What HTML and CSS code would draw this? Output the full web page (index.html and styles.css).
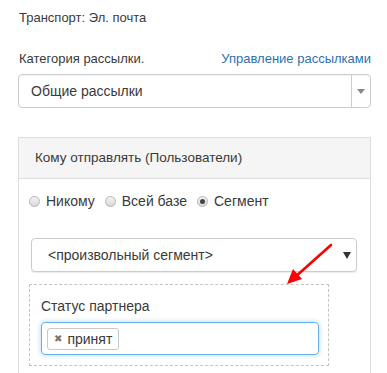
FILE: index.html
```html
<!DOCTYPE html>
<html lang="ru">
<head>
  <meta charset="UTF-8" />
  <title>Рассылка</title>
  <link rel="stylesheet" href="styles.css">
</head>
<body>
 <div class="page">
  <p class="transport">Транспорт: Эл. почта</p>

  <div class="field-head">
    <span>Категория рассылки.</span>
    <a href="#" class="link">Управление рассылками</a>
  </div>
  <div class="select select-main">
    <span class="select-text">Общие рассылки</span>
    <span class="select-arrow"><i class="caret light"></i></span>
  </div>

  <div class="panel">
    <div class="panel-heading">Кому отправлять (Пользователи)</div>
    <div class="panel-body">
      <div class="radios">
        <label class="radio"><span class="dot"></span>Никому</label>
        <label class="radio"><span class="dot"></span>Всей базе</label>
        <label class="radio"><span class="dot checked"></span>Сегмент</label>
      </div>

      <div class="select select-segment">
        <span class="select-text">&lt;произвольный сегмент&gt;</span>
        <i class="caret dark"></i>
      </div>

      <div class="segment-box">
        <div class="segment-label">Статус партнера</div>
        <div class="tags-input">
          <span class="tag"><span class="tag-x">✖</span>принят</span>
        </div>
      </div>
    </div>
  </div>

  <svg class="pointer" width="387" height="373" viewBox="0 0 387 373">
    <line x1="331" y1="245" x2="294" y2="278" stroke="#f00" stroke-width="2.6" stroke-linecap="round"/>
    <polygon points="287,284 293,269 302,279" fill="#f00"/>
  </svg>
 </div>
</body>
</html>
```

FILE: styles.css
```css
body {
  margin: 0;
  font-family: "Liberation Sans", Arial, sans-serif;
  font-size: 13px;
  color: #3a3a3a;
  background: #fff;
}
.page {
  position: relative;
  width: 353px;
  height: 373px;
  padding-left: 18px;
  overflow: hidden;
}
.transport {
  margin: 0;
  padding: 10px 0 0 1px;
  line-height: 16px;
}
.field-head {
  display: flex;
  justify-content: space-between;
  align-items: center;
  margin-top: 25px;
  padding-left: 1px;
  line-height: 16px;
}
.link {
  color: #2a72ad;
  text-decoration: none;
}

/* SELECT */
.select {
  display: flex;
  align-items: center;
  box-sizing: border-box;
  border: 1px solid #ccc;
  border-radius: 4px;
  background: #fff;
  height: 34px;
}
.select-main {
  margin-top: 7px;
  box-shadow: inset 0 1px 1px rgba(0,0,0,0.05);
}
.select-text {
  flex: 1;
  padding-left: 12px;
  font-size: 14px;
}
.select-arrow {
  display: flex;
  align-items: center;
  justify-content: center;
  width: 18px;
  height: 100%;
  border-left: 1px solid #ccc;
}
.caret {
  display: block;
  width: 0;
  height: 0;
  border-left: 4px solid transparent;
  border-right: 4px solid transparent;
}
.caret.light {
  border-top: 5px solid #888;
}
.caret.dark {
  border-top: 7px solid #333;
  margin-right: 5px;
}

/* PANEL */
.panel {
  margin-top: 29px;
  border: 1px solid #ddd;
  border-bottom: none;
  height: 300px;
}
.panel-heading {
  background: #f5f5f5;
  border-bottom: 1px solid #ddd;
  height: 40px;
  line-height: 40px;
  padding-left: 16px;
  font-size: 13.5px;
}
.panel-body {
  padding: 14px 13px 0 12px;
}
.radios {
  display: flex;
  gap: 10px;
  margin-left: -2px;
  line-height: 16px;
  font-size: 14px;
}
.radio {
  display: flex;
  align-items: center;
  gap: 6px;
}
.dot {
  box-sizing: border-box;
  width: 11px;
  height: 11px;
  border-radius: 50%;
  border: 1px solid #b5b5b5;
  background: linear-gradient(#f4f4f4, #d8d8d8);
  position: relative;
}
.dot.checked::after {
  content: "";
  position: absolute;
  left: 2px;
  top: 2px;
  width: 5px;
  height: 5px;
  border-radius: 50%;
  background: #444;
}
.select-segment {
  margin-top: 29px;
  box-shadow: 0 1px 1px rgba(0,0,0,0.08);
}
.select-segment .select-text {
  padding-left: 16px;
}

/* SEGMENT */
.segment-box {
  margin-top: 12px;
  margin-left: -2px;
  width: 300px;
  box-sizing: border-box;
  border: 1px dashed #c4c4c4;
  padding: 13px 10px 10px 11px;
}
.segment-label {
  font-size: 14px;
  line-height: 16px;
  margin-bottom: 8px;
}
.tags-input {
  display: flex;
  align-items: center;
  box-sizing: border-box;
  width: 278px;
  height: 33px;
  border: 1px solid #66afe9;
  border-radius: 4px;
  box-shadow: 0 0 5px rgba(102,175,233,0.55);
  padding-left: 5px;
}
.tag {
  display: flex;
  align-items: center;
  gap: 5px;
  height: 22px;
  box-sizing: border-box;
  padding: 0 6px 0 6px;
  border: 1px solid #c8c8c8;
  border-radius: 3px;
  background: #fff;
  font-size: 14px;
}
.tag-x {
  color: #777;
  font-family: "DejaVu Sans", sans-serif;
  font-size: 10px;
}
.pointer {
  position: absolute;
  left: 0;
  top: 0;
  pointer-events: none;
}
```
